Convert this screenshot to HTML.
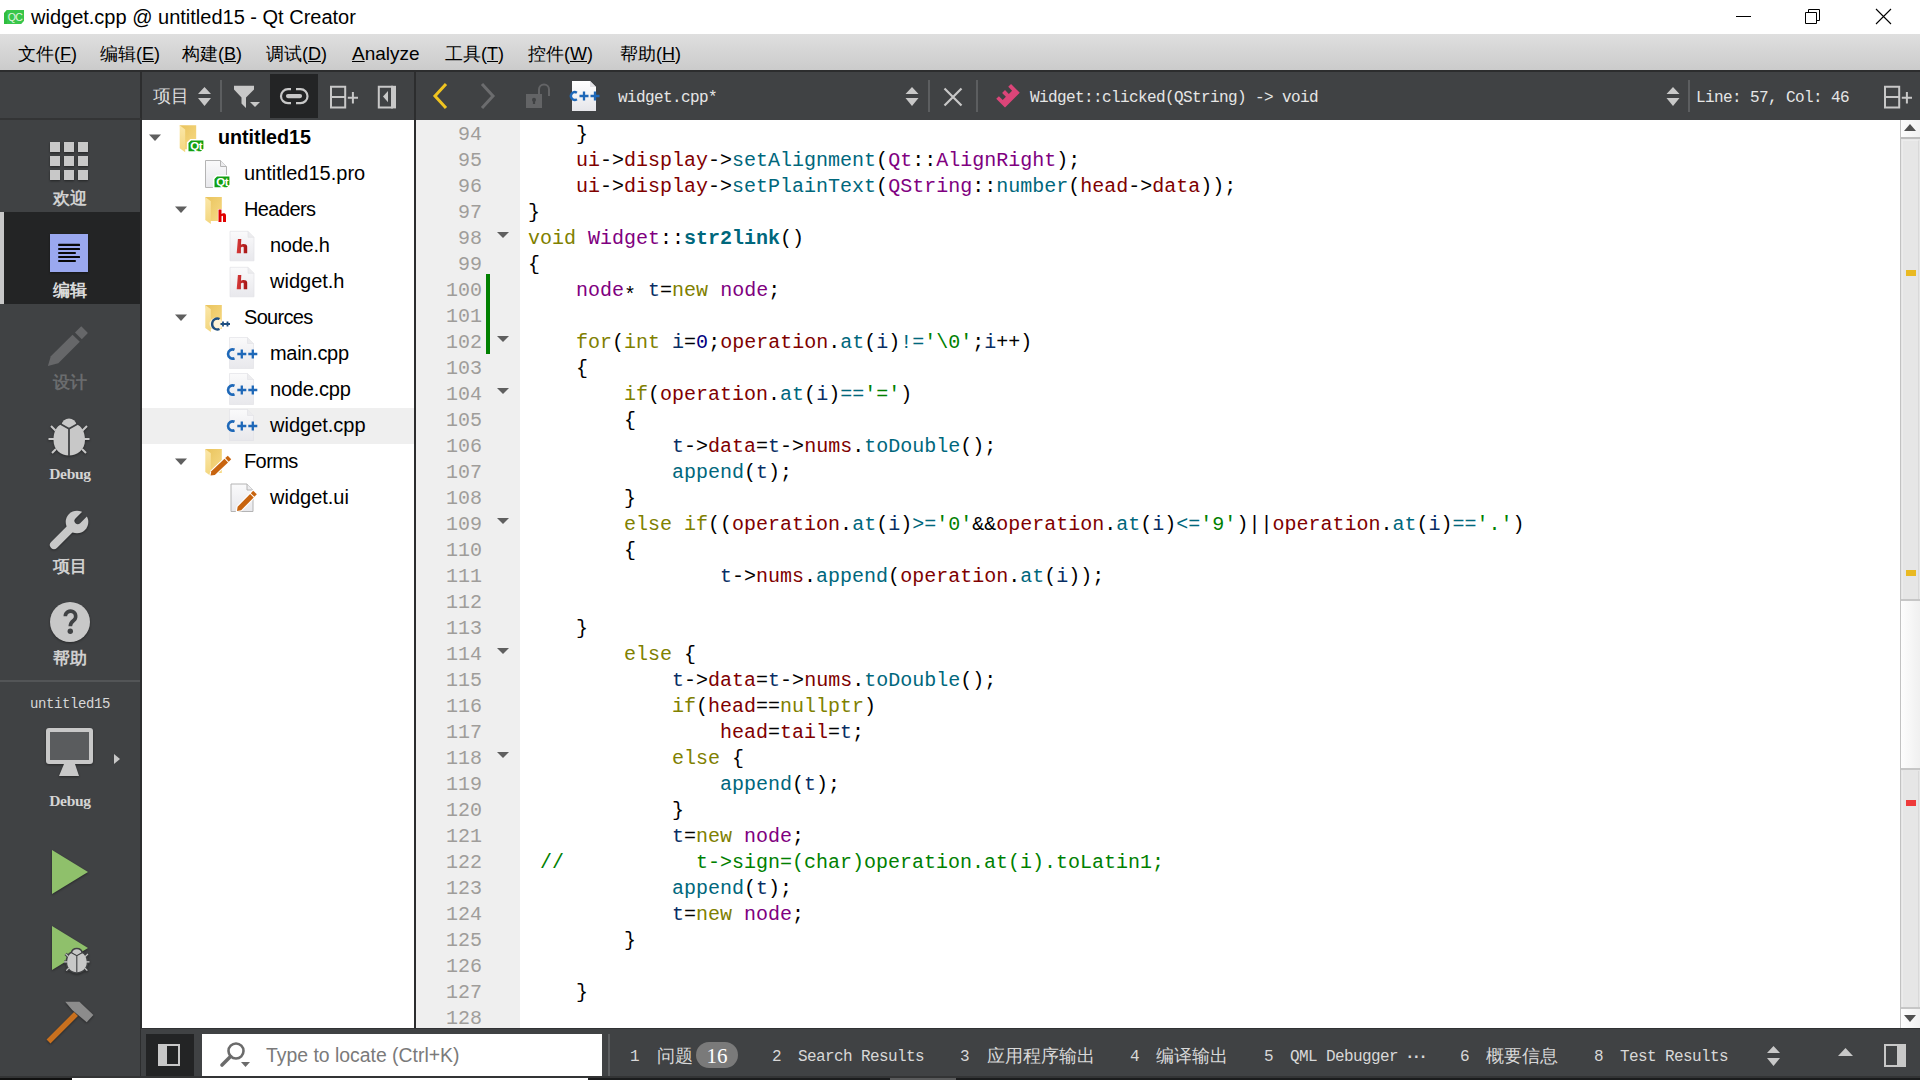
<!DOCTYPE html>
<html><head><meta charset="utf-8">
<style>
*{box-sizing:border-box}
html,body{margin:0;padding:0}
body{width:1920px;height:1080px;position:relative;overflow:hidden;background:#fff;font-family:"Liberation Sans",sans-serif}
.a{position:absolute}
.mono{font-family:"Liberation Mono",monospace}
/* title */
#title{left:0;top:0;width:1920px;height:34px;background:#fff}
#menubar{left:0;top:34px;width:1920px;height:36px;background:linear-gradient(#dfdfdf,#cbcbcb)}
.menu{top:36px;height:36px;line-height:36px;font-size:18px;color:#000;white-space:nowrap}
#toolbar{left:0;top:70px;width:1920px;height:50px;background:#404244;border-top:2px solid #2c2d2e}
#modebar{left:0;top:120px;width:141px;height:960px;background:#404244}
#tree{left:142px;top:120px;width:272px;height:908px;background:#fff}
#gutter{left:416px;top:120px;width:104px;height:908px;background:#efefef}
#code{left:520px;top:120px;width:1380px;height:908px;background:#fff;overflow:hidden}
#bottombar{left:141px;top:1028px;width:1779px;height:52px;background:#404244}
.ln{position:absolute;left:416px;width:66px;text-align:right;font-family:"Liberation Mono",monospace;font-size:20px;line-height:26px;color:#9f9d9a;white-space:pre}
pre.src{position:absolute;left:528px;top:122px;margin:0;font-family:"Liberation Mono",monospace;font-size:20px;line-height:26px;color:#000;white-space:pre}
.k{color:#808000}.t{color:#800080}.f{color:#800000}.fn{color:#00677c}.l{color:#092e64}.n{color:#000080}.s{color:#008000}.c{color:#008000}.b{font-weight:bold}
.tree{position:absolute;font-size:20px;color:#000;white-space:nowrap;line-height:36px;height:36px}
.mtxt{position:absolute;left:0;width:140px;text-align:center;font-size:16.5px;font-weight:bold;color:#d0d0d0;white-space:nowrap}
.btxt{position:absolute;top:1032px;height:50px;line-height:50px;font-family:"Liberation Mono",monospace;font-size:16px;letter-spacing:-0.6px;color:#d8d8d8;white-space:nowrap}
.bcj{font-family:"Liberation Sans",sans-serif!important;font-size:17.7px!important;letter-spacing:0!important;top:1031px!important}
</style></head><body>
<!-- TITLE BAR -->
<div id="title" class="a"></div>
<svg class="a" style="left:4px;top:10px" width="20" height="14" viewBox="0 0 20 14"><path d="M2.8 0H20V10.8L17 14H0V3z" fill="#2fbd3f"/><path d="M2.8 0H20V10.8L17 14H3V3z" fill="#40cc52" opacity="0.6"/><text x="11" y="11.2" font-family="Liberation Sans" font-size="10.5" fill="#e0f5e0" text-anchor="middle" letter-spacing="-0.5">QC</text></svg>
<div class="a" style="left:31px;top:0;height:34px;line-height:34px;font-size:20px;color:#000;white-space:nowrap">widget.cpp @ untitled15 - Qt Creator</div>
<div class="a" style="left:1736px;top:16px;width:15px;height:1px;background:#000"></div>
<svg class="a" style="left:1804px;top:8px" width="18" height="18" viewBox="0 0 18 18"><path d="M1.5 4.5h11v11h-11z M4.5 4.5V1.5h11v11h-3" fill="none" stroke="#000" stroke-width="1"/></svg>
<svg class="a" style="left:1875px;top:8px" width="18" height="18" viewBox="0 0 18 18"><path d="M1 1L16 16M16 1L1 16" stroke="#000" stroke-width="1.1"/></svg>
<!-- MENU -->
<div id="menubar" class="a"></div>
<div class="a menu" style="left:18px">文件(<u>F</u>)</div>
<div class="a menu" style="left:100px">编辑(<u>E</u>)</div>
<div class="a menu" style="left:182px">构建(<u>B</u>)</div>
<div class="a menu" style="left:266px">调试(<u>D</u>)</div>
<div class="a menu" style="left:352px;font-size:19px"><u>A</u>nalyze</div>
<div class="a menu" style="left:445px">工具(<u>T</u>)</div>
<div class="a menu" style="left:528px">控件(<u>W</u>)</div>
<div class="a menu" style="left:620px">帮助(<u>H</u>)</div>
<!-- TOOLBAR -->
<div id="toolbar" class="a"></div>

<div class="a" style="left:140px;top:72px;width:2px;height:48px;background:#2c2d2e"></div>
<div class="a" style="left:153px;top:72px;height:48px;line-height:48px;font-size:18px;color:#dcdcdc;white-space:nowrap">项目</div>
<svg class="a" style="left:197px;top:86px" width="15" height="21" viewBox="0 0 15 21"><path d="M7.5 1L14 8H1z M1 12H14L7.5 20z" fill="#c8c8c8"/></svg>
<div class="a" style="left:220px;top:80px;width:2px;height:32px;background:#5c5e60"></div>
<svg class="a" style="left:230px;top:80px" width="34" height="32" viewBox="230 80 34 32"><path d="M234 85.8H254V89.5L246 97.5V108L241.5 103.5V97.5L234 89.5z" fill="#c8c8c8"/><path d="M250 102H260L255 107z" fill="#c8c8c8"/></svg>
<div class="a" style="left:270px;top:74px;width:48px;height:44px;background:#232425"></div>
<svg class="a" style="left:276px;top:84px" width="36" height="24" viewBox="276 84 36 24"><path d="M291 89.2H288A7 7 0 0 0 288 103.2H291M296 89.2H300.5A7 7 0 0 1 300.5 103.2H296" fill="none" stroke="#c8c8c8" stroke-width="2.2"/><path d="M288 96.1H300" stroke="#c8c8c8" stroke-width="4.2" stroke-linecap="round"/></svg>
<svg class="a" style="left:326px;top:82px" width="36" height="30" viewBox="326 82 36 30"><path d="M331 86.8H345.2V107.4H331zM331 97H345.2" fill="none" stroke="#c8c8c8" stroke-width="2"/><path d="M347.8 97.8H358M352.9 92V103.6" stroke="#c8c8c8" stroke-width="2"/></svg>
<svg class="a" style="left:374px;top:82px" width="26" height="30" viewBox="374 82 26 30"><path d="M378.8 86.8H392V107.4H378.8z" fill="none" stroke="#c8c8c8" stroke-width="2"/><path d="M391 85.8H396V108.4H391z" fill="#c8c8c8"/><path d="M388 91V102.2L383 96.6z" fill="#c8c8c8"/></svg>
<div class="a" style="left:414px;top:72px;width:2px;height:48px;background:#2c2d2e"></div>
<svg class="a" style="left:431px;top:82px" width="18" height="28" viewBox="0 0 18 28"><path d="M15 2L4 14L15 26" fill="none" stroke="#f0c420" stroke-width="3"/></svg>
<svg class="a" style="left:479px;top:82px" width="18" height="28" viewBox="0 0 18 28"><path d="M3 2L14 14L3 26" fill="none" stroke="#6b6c6e" stroke-width="3"/></svg>
<svg class="a" style="left:520px;top:80px" width="36" height="32" viewBox="520 80 36 32"><path d="M526 94H542V108H526z" fill="#636466"/><circle cx="534" cy="99.8" r="2" fill="#404244"/><path d="M534 100V104" stroke="#404244" stroke-width="2.2"/><path d="M539 94V89.5A5 5 0 0 1 549 89.5V96" fill="none" stroke="#636466" stroke-width="2"/></svg>
<svg class="a" style="left:564px;top:78px" width="40" height="36" viewBox="564 78 40 36"><defs><linearGradient id="pg2" x1="0" y1="0" x2="0" y2="1"><stop offset="0" stop-color="#ffffff"/><stop offset="1" stop-color="#e6e6ea"/></linearGradient></defs><path d="M572 81H590L596 87V111H572z" fill="url(#pg2)"/><path d="M590 81V87H596" fill="#e2e2e6"/><path d="M576.9 92.7A3.9 3.9 0 1 0 576.9 99.3" fill="none" stroke="#1e68b8" stroke-width="2.4"/><path d="M579.5 96H588.5M584.0 91.5V100.5M590.5 96H599.5M595.0 91.5V100.5" stroke="#1e68b8" stroke-width="2.3"/></svg>
<div class="a mono" style="left:618px;top:74px;height:48px;line-height:48px;font-size:16px;letter-spacing:-0.6px;color:#e6e6e6;white-space:pre">widget.cpp*</div>
<svg class="a" style="left:904px;top:86px" width="16" height="21" viewBox="0 0 16 21"><path d="M8 1L14.5 8H1.5z M1.5 12H14.5L8 20z" fill="#c8c8c8"/></svg>
<div class="a" style="left:928px;top:80px;width:2px;height:32px;background:#5c5e60"></div>
<svg class="a" style="left:942px;top:86px" width="22" height="22" viewBox="0 0 22 22"><path d="M2.5 2.5L19.5 19.5M19.5 2.5L2.5 19.5" stroke="#c8c8c8" stroke-width="2.2"/></svg>
<div class="a" style="left:976px;top:80px;width:2px;height:32px;background:#5c5e60"></div>
<svg class="a" style="left:990px;top:80px" width="34" height="32" viewBox="990 80 34 32"><path d="M1005.00 107.60L1019.78 92.82L1011.01 84.05L1008.25 86.81L1012.07 90.63L1008.82 93.88L1005.00 90.06L1002.10 92.96L1005.92 96.78L1002.74 99.96L998.92 96.14L996.23 98.83z" fill="#dc4579"/></svg>
<div class="a mono" style="left:1030px;top:74px;height:48px;line-height:48px;font-size:16px;letter-spacing:-0.6px;color:#e6e6e6;white-space:pre">Widget::clicked(QString) -&gt; void</div>
<svg class="a" style="left:1665px;top:86px" width="16" height="21" viewBox="0 0 16 21"><path d="M8 1L14.5 8H1.5z M1.5 12H14.5L8 20z" fill="#c8c8c8"/></svg>
<div class="a" style="left:1688px;top:80px;width:2px;height:32px;background:#5c5e60"></div>
<div class="a mono" style="left:1696px;top:74px;height:48px;line-height:48px;font-size:16px;letter-spacing:-0.6px;color:#e6e6e6;white-space:pre">Line: 57, Col: 46</div>
<svg class="a" style="left:1880px;top:82px" width="36" height="30" viewBox="1880 82 36 30"><path d="M1885 86.8H1899.2V107.4H1885zM1885 97H1899.2" fill="none" stroke="#c8c8c8" stroke-width="2"/><path d="M1901.8 97.8H1912M1906.9 92V103.6" stroke="#c8c8c8" stroke-width="2"/></svg>

<!-- MODE BAR -->
<div id="modebar" class="a"></div>
<div class="a" style="left:140px;top:120px;width:2px;height:960px;background:#2c2d2e"></div><div class="a" style="left:0;top:118px;width:141px;height:2px;background:#333435"></div>
<svg class="a" style="left:50px;top:142px;filter:drop-shadow(0 1px 1px rgba(0,0,0,0.45))" width="39" height="40" viewBox="0 0 39 40"><g fill="#c8c8c8"><rect x="0" y="0" width="10" height="10"/><rect x="14" y="0" width="10" height="10"/><rect x="28" y="0" width="10" height="10"/><rect x="0" y="14" width="10" height="10"/><rect x="14" y="14" width="10" height="10"/><rect x="28" y="14" width="10" height="10"/><rect x="0" y="28" width="10" height="10"/><rect x="14" y="28" width="10" height="10"/><rect x="28" y="28" width="10" height="10"/></g></svg>
<div class="mtxt" style="top:187px;height:22px;line-height:22px">欢迎</div>
<div class="a" style="left:0;top:212px;width:140px;height:92px;background:#232425"></div>
<div class="a" style="left:0;top:212px;width:4px;height:92px;background:#c8c8c8"></div>
<svg class="a" style="left:50px;top:234px;filter:drop-shadow(0 1px 1px rgba(0,0,0,0.4))" width="38" height="38" viewBox="0 0 38 38"><rect width="38" height="38" fill="#9aa8ef"/><g fill="#080808"><rect x="8.2" y="9.8" width="21.8" height="2.1" rx="0.5"/><rect x="8.2" y="13.9" width="21.8" height="2.1" rx="0.5"/><rect x="8.2" y="17.9" width="17.6" height="2.1" rx="0.5"/><rect x="8.2" y="21.9" width="21.8" height="2.1" rx="0.5"/><rect x="8.2" y="25.9" width="17.6" height="2.1" rx="0.5"/></g></svg>
<div class="mtxt" style="top:279px;height:22px;line-height:22px;color:#dadada;font-weight:bold">编辑</div>
<svg class="a" style="left:44px;top:322px" width="48" height="48" viewBox="44 322 48 48"><path d="M47.9 366L50.8 356.3L72.5 334.8L79.8 341.8L58.3 363.3z" fill="#666769"/><path d="M75 332.5L81.25 326.25L87.9 332.9L81.8 339.2z" fill="#666769"/></svg>
<div class="mtxt" style="top:371px;height:22px;line-height:22px;color:#6a6c6e">设计</div>
<svg class="a" style="left:46px;top:414px;filter:drop-shadow(0 1px 1px rgba(0,0,0,0.4))" width="46" height="46" viewBox="46 414 46 46"><path d="M61.5 424.5A7.6 7.2 0 0 1 76.5 424.5L69 428.5z" fill="#c8c8c8"/><path d="M53.5 440C53.5 431 57 426 61 424.5L69 429L77 424.5C81 426 85 431 85 440C85 450 77 455.5 69 455.5C61 455.5 53.5 450 53.5 440z" fill="#c8c8c8"/><path d="M60.5 424L69 428.8L77.5 424M69 428.8V456" fill="none" stroke="#404244" stroke-width="1.8"/><path d="M51 426L55.5 430.5M48.5 439H54M52 453L56 449M87 426L82.5 430.5M89.5 439H84M86 453L82 449" stroke="#c8c8c8" stroke-width="2"/></svg>
<div class="mtxt" style="top:463px;height:22px;line-height:22px;font-family:'Liberation Serif';font-size:15.5px;font-weight:bold;letter-spacing:-0.3px;color:#d4d4d4">Debug</div>
<svg class="a" style="left:46px;top:506px;filter:drop-shadow(0 1px 1px rgba(0,0,0,0.4))" width="48" height="46" viewBox="46 506 48 46"><defs><mask id="wm" maskUnits="userSpaceOnUse" x="46" y="506" width="48" height="46"><rect x="46" y="506" width="48" height="46" fill="#fff"/><path d="M77.8 520.8L94 504.6" stroke="#000" stroke-width="6.6" stroke-linecap="round"/></mask></defs><g mask="url(#wm)"><circle cx="77" cy="522" r="11.3" fill="#c8c8c8"/><path d="M54 545L71 528" stroke="#c8c8c8" stroke-width="8.2" stroke-linecap="round"/></g></svg>
<div class="mtxt" style="top:555px;height:22px;line-height:22px">项目</div>
<svg class="a" style="left:46px;top:597px;filter:drop-shadow(0 1px 1px rgba(0,0,0,0.4))" width="48" height="48" viewBox="46 598 48 48"><circle cx="70" cy="623" r="20" fill="#c8c8c8"/><path d="M65.3 617.3A5.2 5.2 0 1 1 73.6 621.5C71.3 623.3 70.3 624.3 70.3 627.3" fill="none" stroke="#404244" stroke-width="3.6"/><circle cx="70.3" cy="632.3" r="2.7" fill="#404244"/></svg>
<div class="mtxt" style="top:647px;height:22px;line-height:22px">帮助</div>
<div class="a" style="left:0;top:680px;width:140px;height:2px;background:#535557"></div>
<div class="mtxt mono" style="top:693px;height:22px;line-height:22px;font-size:14px;letter-spacing:-0.4px;font-weight:normal;color:#d8d8d8">untitled15</div>
<svg class="a" style="left:44px;top:726px;filter:drop-shadow(0 1px 1px rgba(0,0,0,0.4))" width="52" height="52" viewBox="0 0 52 52"><rect x="2" y="2" width="47" height="36" rx="3" fill="#c8c8c8"/><rect x="6" y="6" width="39" height="28" fill="#5a5c5e"/><path d="M20 38H31L35 50H15z" fill="#c8c8c8"/></svg>
<svg class="a" style="left:112px;top:752px" width="10" height="14" viewBox="0 0 10 14"><path d="M2 2L8 7L2 12z" fill="#c8c8c8"/></svg>
<div class="mtxt" style="top:790px;height:22px;line-height:22px;font-family:'Liberation Serif';font-size:15.5px;font-weight:bold;letter-spacing:-0.3px;color:#d4d4d4">Debug</div>
<svg class="a" style="left:50px;top:848px;filter:drop-shadow(0 1px 1px rgba(0,0,0,0.4))" width="40" height="48" viewBox="0 0 40 48"><path d="M2 2L38 24L2 46z" fill="#8fc06b"/></svg>
<svg class="a" style="left:46px;top:920px;filter:drop-shadow(0 1px 1px rgba(0,0,0,0.4))" width="50" height="56" viewBox="46 920 50 56"><path d="M52 926L88 948L52 970z" fill="#8fc06b"/><g transform="translate(76.8 960.4) scale(0.62) translate(-69 -436.5)"><path d="M61.5 424.5A7.6 7.2 0 0 1 76.5 424.5L69 428.5z" fill="none" stroke="#404244" stroke-width="5"/><path d="M53.5 440C53.5 431 57 426 61 424.5L69 429L77 424.5C81 426 85 431 85 440C85 450 77 455.5 69 455.5C61 455.5 53.5 450 53.5 440z" fill="#404244" stroke="#404244" stroke-width="5"/><path d="M51 426L55.5 430.5M48.5 439H54M52 453L56 449M87 426L82.5 430.5M89.5 439H84M86 453L82 449" stroke="#404244" stroke-width="5"/><path d="M61.5 424.5A7.6 7.2 0 0 1 76.5 424.5L69 428.5z" fill="#c8c8c8"/><path d="M53.5 440C53.5 431 57 426 61 424.5L69 429L77 424.5C81 426 85 431 85 440C85 450 77 455.5 69 455.5C61 455.5 53.5 450 53.5 440z" fill="#c8c8c8"/><path d="M60.5 424L69 428.8L77.5 424M69 428.8V456" fill="none" stroke="#404244" stroke-width="1.8"/><path d="M51 426L55.5 430.5M48.5 439H54M52 453L56 449M87 426L82.5 430.5M89.5 439H84M86 453L82 449" stroke="#c8c8c8" stroke-width="2"/></g></svg>
<svg class="a" style="left:44px;top:998px;filter:drop-shadow(0 1px 1px rgba(0,0,0,0.4))" width="52" height="48" viewBox="44 998 52 48"><path d="M48.5 1041.5L76 1014" stroke="#c8701e" stroke-width="5.5"/><path d="M65.2 1001.7L79.4 1001.7L93.4 1015L86.7 1022.2L72.2 1010z" fill="#8c8c8c"/></svg>
<div class="a" style="left:0;top:1076px;width:141px;height:2px;background:#333435"></div>
<div class="a" style="left:0;top:1078px;width:72px;height:2px;background:#111"></div>

<!-- TREE -->
<div class="a" style="left:142px;top:408px;width:272px;height:36px;background:#efefef"></div>
<svg class="a" style="left:142px;top:120px" width="272" height="400" viewBox="142 120 272 400"><defs><linearGradient id="fb" x1="0" y1="0" x2="1" y2="1"><stop offset="0" stop-color="#e9c35c"/><stop offset="1" stop-color="#f7da86"/></linearGradient><linearGradient id="ff" x1="0" y1="0" x2="0" y2="1"><stop offset="0" stop-color="#fbe7a8"/><stop offset="1" stop-color="#f3d67e"/></linearGradient><linearGradient id="pg" x1="0" y1="0" x2="0" y2="1"><stop offset="0" stop-color="#fafafb"/><stop offset="1" stop-color="#e8e8ec"/></linearGradient><linearGradient id="hr" x1="0" y1="0" x2="1" y2="0"><stop offset="0" stop-color="#d83a3a"/><stop offset="1" stop-color="#a51515"/></linearGradient></defs><path d="M149 134.5H161L155 141.0z" fill="#5f5f5f"/><path d="M179.7 125.2H196.2V149.2H183.7z" fill="url(#fb)"/><path d="M179.7 125.2L185.2 129.4V152.2L179.7 148.2z" fill="url(#ff)"/><path d="M190.7 139.7H204.2V149.0L201.2 152.0H187.7V142.7z" fill="#12a012" stroke="#fff" stroke-width="1.6"/><text x="196.14999999999998" y="149.8" font-family="Liberation Sans" font-weight="bold" font-size="11.5" fill="#fff" text-anchor="middle" letter-spacing="-0.4">Qt</text><path d="M205.5 160.5H220.5L226.5 166.5V187.5H205.5z" fill="url(#pg)" stroke="#b4b4b4" stroke-width="1"/><path d="M220.5 160.5V166.5H226.5" fill="#ececee" stroke="#b4b4b4" stroke-width="1"/><path d="M216.7 175.7H230.2V185.0L227.2 188.0H213.7V178.7z" fill="#12a012" stroke="#fff" stroke-width="1.6"/><text x="222.14999999999998" y="185.8" font-family="Liberation Sans" font-weight="bold" font-size="11.5" fill="#fff" text-anchor="middle" letter-spacing="-0.4">Qt</text><path d="M175 206.5H187L181 213.0z" fill="#5f5f5f"/><path d="M205.3 197H221.8V221H209.3z" fill="url(#fb)"/><path d="M205.3 197L210.8 201.2V224L205.3 220z" fill="url(#ff)"/><path d="M218.5 209.5H221.5V214C222.5 213 226 212.5 226 215.5V222H223V216.5C223 215.5 222 215.5 221.5 216.2V222H218.5z" fill="#e00000" stroke="#fff" stroke-width="1.2" paint-order="stroke"/><path d="M230 231.3H248L254 237.3V260.8H230z" fill="url(#pg)" stroke="#e2e2e6" stroke-width="0.7"/><path d="M248 231.3V237.3H254" fill="#ececee" stroke="#e2e2e6" stroke-width="0.7"/><path d="M237.89999999999998 239H241.29999999999998L241.0 244.6C242.2 243.6 247.2 243.2 247.2 246.5V253.2H243.7V247.5C243.7 246.5 241.7 246.5 240.89999999999998 247.6V253.2H236.7z" fill="url(#hr)"/><path d="M230 267.3H248L254 273.3V296.8H230z" fill="url(#pg)" stroke="#e2e2e6" stroke-width="0.7"/><path d="M248 267.3V273.3H254" fill="#ececee" stroke="#e2e2e6" stroke-width="0.7"/><path d="M237.89999999999998 275H241.29999999999998L241.0 280.6C242.2 279.6 247.2 279.2 247.2 282.5V289.2H243.7V283.5C243.7 282.5 241.7 282.5 240.89999999999998 283.6V289.2H236.7z" fill="url(#hr)"/><path d="M175 314.5H187L181 321.0z" fill="#5f5f5f"/><path d="M205.3 305H221.8V329H209.3z" fill="url(#fb)"/><path d="M205.3 305L210.8 309.2V332L205.3 328z" fill="url(#ff)"/><circle cx="216" cy="324" r="6.5" fill="#fff6e0" opacity="0.9"/><path d="M219.5 319A5.2 5.5 0 1 0 219.5 329" fill="none" stroke="#1f4f80" stroke-width="2.4"/><path d="M220.5 324H225.5M223 321.5V326.5M225 324H230M227.5 321.5V326.5" stroke="#1f4f80" stroke-width="1.8"/><path d="M229.5 337.5H247.5L253.5 343.5V368.5H229.5z" fill="url(#pg)" stroke="#e2e2e6" stroke-width="0.7"/><path d="M247.5 337.5V343.5H253.5" fill="#ececee" stroke="#e2e2e6" stroke-width="0.7"/><path d="M234.5 349.8A4.6 4.6 0 1 0 234.5 358.2" fill="none" stroke="#1e68b8" stroke-width="2.6"/><path d="M237.3 354H246.3M241.8 349.5V358.5M248.3 354H257.3M252.8 349.5V358.5" stroke="#1e68b8" stroke-width="2.3"/><path d="M229.5 373.5H247.5L253.5 379.5V404.5H229.5z" fill="url(#pg)" stroke="#e2e2e6" stroke-width="0.7"/><path d="M247.5 373.5V379.5H253.5" fill="#ececee" stroke="#e2e2e6" stroke-width="0.7"/><path d="M234.5 385.8A4.6 4.6 0 1 0 234.5 394.2" fill="none" stroke="#1e68b8" stroke-width="2.6"/><path d="M237.3 390H246.3M241.8 385.5V394.5M248.3 390H257.3M252.8 385.5V394.5" stroke="#1e68b8" stroke-width="2.3"/><path d="M229.5 409.5H247.5L253.5 415.5V440.5H229.5z" fill="url(#pg)" stroke="#e2e2e6" stroke-width="0.7"/><path d="M247.5 409.5V415.5H253.5" fill="#ececee" stroke="#e2e2e6" stroke-width="0.7"/><path d="M234.5 421.8A4.6 4.6 0 1 0 234.5 430.2" fill="none" stroke="#1e68b8" stroke-width="2.6"/><path d="M237.3 426H246.3M241.8 421.5V430.5M248.3 426H257.3M252.8 421.5V430.5" stroke="#1e68b8" stroke-width="2.3"/><path d="M175 458.5H187L181 465.0z" fill="#5f5f5f"/><path d="M205.3 449H221.8V473H209.3z" fill="url(#fb)"/><path d="M205.3 449L210.8 453.2V476L205.3 472z" fill="url(#ff)"/><path d="M210.5 475.5L214.8 474.9L228.0 462.4L224.5 458.8L211.3 471.3z" fill="none" stroke="#fff" stroke-width="2.2"/><path d="M228.7 461.7L231.2 459.3L227.8 455.7L225.2 458.1z" fill="none" stroke="#fff" stroke-width="2.2"/><path d="M210.5 475.5L214.8 474.9L228.0 462.4L224.5 458.8L211.3 471.3z" fill="#c8640f"/><path d="M228.7 461.7L231.2 459.3L227.8 455.7L225.2 458.1z" fill="#c8640f"/><path d="M231 484H247L253 490V511.5H231z" fill="url(#pg)" stroke="#b4b4b4" stroke-width="1"/><path d="M247 484V490H253" fill="#ececee" stroke="#b4b4b4" stroke-width="1"/><path d="M237.0 511.0L241.2 510.2L253.7 497.5L250.1 494.0L237.6 506.7z" fill="none" stroke="#fff" stroke-width="2.2"/><path d="M254.4 496.8L256.8 494.2L253.2 490.8L250.8 493.3z" fill="none" stroke="#fff" stroke-width="2.2"/><path d="M237.0 511.0L241.2 510.2L253.7 497.5L250.1 494.0L237.6 506.7z" fill="#c8640f"/><path d="M254.4 496.8L256.8 494.2L253.2 490.8L250.8 493.3z" fill="#c8640f"/></svg>
<div class="tree" style="left:218px;top:119px;font-weight:bold;font-size:19.7px">untitled15</div>
<div class="tree" style="left:244px;top:155px">untitled15.pro</div>
<div class="tree" style="left:244px;top:191px;letter-spacing:-0.6px">Headers</div>
<div class="tree" style="left:270px;top:227px;letter-spacing:-0.25px">node.h</div>
<div class="tree" style="left:270px;top:263px">widget.h</div>
<div class="tree" style="left:244px;top:299px;letter-spacing:-0.7px">Sources</div>
<div class="tree" style="left:270px;top:335px;letter-spacing:-0.3px">main.cpp</div>
<div class="tree" style="left:270px;top:371px;letter-spacing:-0.2px">node.cpp</div>
<div class="tree" style="left:270px;top:407px">widget.cpp</div>
<div class="tree" style="left:244px;top:443px;letter-spacing:-0.6px">Forms</div>
<div class="tree" style="left:270px;top:479px">widget.ui</div>
<div class="a" style="left:414px;top:120px;width:2px;height:908px;background:#2c2d2e"></div>

<!-- EDITOR -->
<div id="gutter" class="a"></div>
<pre class="ln a" style="top:122px;margin:0">94
95
96
97
98
99
100
101
102
103
104
105
106
107
108
109
110
111
112
113
114
115
116
117
118
119
120
121
122
123
124
125
126
127
128</pre>
<svg class="a" style="left:497px;top:119px" width="13" height="908" viewBox="0 0 13 908" fill="#5f5f5f"><path d="M0 113H12L6 119z"/><path d="M0 217H12L6 223z"/><path d="M0 269H12L6 275z"/><path d="M0 399H12L6 405z"/><path d="M0 529H12L6 535z"/><path d="M0 633H12L6 639z"/></svg>
<div class="a" style="left:486px;top:274px;width:4px;height:80px;background:#008000"></div>
<pre class="src">    }
    <span class="f">ui</span>-&gt;<span class="f">display</span>-&gt;<span class="fn">setAlignment</span>(<span class="t">Qt</span>::<span class="t">AlignRight</span>);
    <span class="f">ui</span>-&gt;<span class="f">display</span>-&gt;<span class="fn">setPlainText</span>(<span class="t">QString</span>::<span class="fn">number</span>(<span class="f">head</span>-&gt;<span class="f">data</span>));
}
<span class="k">void</span> <span class="t">Widget</span>::<span class="fn b">str2link</span>()
{
    <span class="t">node</span><span style="position:relative;top:5px">*</span> <span class="l">t</span>=<span class="k">new</span> <span class="t">node</span>;

    <span class="k">for</span>(<span class="k">int</span> <span class="l">i</span>=<span class="n">0</span>;<span class="f">operation</span>.<span class="fn">at</span>(<span class="l">i</span>)<span class="fn">!=</span><span class="s">'\0'</span>;<span class="l">i</span>++)
    {
        <span class="k">if</span>(<span class="f">operation</span>.<span class="fn">at</span>(<span class="l">i</span>)<span class="fn">==</span><span class="s">'='</span>)
        {
            <span class="l">t</span>-&gt;<span class="f">data</span>=<span class="l">t</span>-&gt;<span class="f">nums</span>.<span class="fn">toDouble</span>();
            <span class="fn">append</span>(<span class="l">t</span>);
        }
        <span class="k">else</span> <span class="k">if</span>((<span class="f">operation</span>.<span class="fn">at</span>(<span class="l">i</span>)<span class="fn">&gt;=</span><span class="s">'0'</span>&amp;&amp;<span class="f">operation</span>.<span class="fn">at</span>(<span class="l">i</span>)<span class="fn">&lt;=</span><span class="s">'9'</span>)||<span class="f">operation</span>.<span class="fn">at</span>(<span class="l">i</span>)<span class="fn">==</span><span class="s">'.'</span>)
        {
                <span class="l">t</span>-&gt;<span class="f">nums</span>.<span class="fn">append</span>(<span class="f">operation</span>.<span class="fn">at</span>(<span class="l">i</span>));

    }
        <span class="k">else</span> {
            <span class="l">t</span>-&gt;<span class="f">data</span>=<span class="l">t</span>-&gt;<span class="f">nums</span>.<span class="fn">toDouble</span>();
            <span class="k">if</span>(<span class="f">head</span>==<span class="k">nullptr</span>)
                <span class="f">head</span>=<span class="f">tail</span>=<span class="l">t</span>;
            <span class="k">else</span> {
                <span class="fn">append</span>(<span class="l">t</span>);
            }
            <span class="l">t</span>=<span class="k">new</span> <span class="t">node</span>;
 <span class="s">//           t-&gt;sign=(char)operation.at(i).toLatin1;</span>
            <span class="fn">append</span>(<span class="l">t</span>);
            <span class="l">t</span>=<span class="k">new</span> <span class="t">node</span>;
        }

    }
</pre>
<!-- SCROLLBAR -->
<div class="a" style="left:1900px;top:120px;width:20px;height:908px;background:#e6e6e6;border-left:1px solid #c2c2c2"></div>
<div class="a" style="left:1901px;top:120px;width:19px;height:19px;background:linear-gradient(90deg,#fdfdfd,#f1f1f1);border-bottom:2px solid #bdbdbd"></div><div class="a" style="left:1902px;top:140px;width:17px;height:459px;border-left:1px solid #ececec;border-right:1px solid #d9d9d9;border-top:1px solid #ececec"></div><div class="a" style="left:1902px;top:771px;width:17px;height:236px;border-left:1px solid #ececec;border-right:1px solid #d9d9d9"></div>
<svg class="a" style="left:1903px;top:123px" width="14" height="9" viewBox="0 0 14 9"><path d="M1 8H13L7 1z" fill="#505050"/></svg>
<div class="a" style="left:1901px;top:599px;width:19px;height:171px;background:linear-gradient(90deg,#fdfdfd,#f0f0f0);border-top:2px solid #c6c6c6;border-bottom:2px solid #c6c6c6"></div>
<div class="a" style="left:1901px;top:1007px;width:19px;height:21px;background:linear-gradient(90deg,#fdfdfd,#f1f1f1);border-top:2px solid #c6c6c6"></div>
<svg class="a" style="left:1903px;top:1014px" width="14" height="9" viewBox="0 0 14 9"><path d="M1 1H13L7 8z" fill="#505050"/></svg>
<div class="a" style="left:1906px;top:270px;width:10px;height:6px;background:#e9b922"></div>
<div class="a" style="left:1906px;top:570px;width:10px;height:6px;background:#e9b922"></div>
<div class="a" style="left:1906px;top:800px;width:10px;height:6px;background:#ee3a3a"></div>

<!-- BOTTOM BAR -->
<div id="bottombar" class="a"></div>
<div class="a" style="left:141px;top:1028px;width:1779px;height:1px;background:#313234"></div>
<div class="a" style="left:146px;top:1034px;width:48px;height:42px;background:#232425"></div>
<svg class="a" style="left:157px;top:1043px" width="24" height="24" viewBox="0 0 24 24"><rect x="1" y="1" width="22" height="22" fill="#c8c8c8"/><rect x="10" y="3" width="11" height="18" fill="#232425"/></svg>
<div class="a" style="left:202px;top:1034px;width:400px;height:42px;background:#fff"></div>
<svg class="a" style="left:219px;top:1041px" width="36" height="28" viewBox="0 0 36 28"><circle cx="17" cy="10" r="7.5" fill="none" stroke="#6b6b6b" stroke-width="2.6"/><path d="M11.5 15.5L3 24" stroke="#6b6b6b" stroke-width="3.6" stroke-linecap="round"/><path d="M22 21H31L26.5 26z" fill="#6b6b6b"/></svg>
<div class="a" style="left:266px;top:1034px;height:42px;line-height:42px;font-size:19.4px;color:#7a7a7a;white-space:nowrap">Type to locate (Ctrl+K)</div>
<div class="a" style="left:608px;top:1034px;width:2px;height:42px;background:#5c5e60"></div>
<div class="btxt" style="left:630px">1</div>
<div class="btxt bcj" style="left:657px">问题</div>
<div class="a" style="left:696px;top:1042px;width:42px;height:26px;border-radius:13px;background:#7a7a7a"></div>
<div class="a" style="left:696px;top:1043px;width:42px;height:26px;line-height:26px;text-align:center;font-family:'Liberation Serif';font-size:21px;color:#fff">16</div>
<div class="btxt" style="left:772px">2</div>
<div class="btxt" style="left:798px">Search Results</div>
<div class="btxt" style="left:960px">3</div>
<div class="btxt bcj" style="left:987px">应用程序输出</div>
<div class="btxt" style="left:1130px">4</div>
<div class="btxt bcj" style="left:1156px">编译输出</div>
<div class="btxt" style="left:1264px">5</div>
<div class="btxt" style="left:1290px">QML Debugger</div>
<div class="btxt" style="left:1405px;font-weight:bold;letter-spacing:-3px">···</div>
<div class="btxt" style="left:1460px">6</div>
<div class="btxt bcj" style="left:1486px">概要信息</div>
<div class="btxt" style="left:1594px">8</div>
<div class="btxt" style="left:1620px">Test Results</div>
<svg class="a" style="left:1766px;top:1045px" width="15" height="22" viewBox="0 0 15 22"><path d="M7.5 1L14 8H1z M1 13H14L7.5 21z" fill="#c8c8c8"/></svg>
<svg class="a" style="left:1837px;top:1046px" width="17" height="11" viewBox="0 0 17 11"><path d="M1 10H16L8.5 2z" fill="#c8c8c8"/></svg>
<svg class="a" style="left:1883px;top:1043px" width="24" height="25" viewBox="0 0 24 25"><rect x="1" y="1" width="22" height="23" fill="#c8c8c8"/><rect x="3" y="3" width="11" height="19" fill="#404244"/></svg>
<div class="a" style="left:141px;top:1076px;width:1779px;height:2px;background:#333435"></div>
<div class="a" style="left:72px;top:1078px;width:516px;height:2px;background:#fff"></div><div class="a" style="left:588px;top:1078px;width:1332px;height:2px;background:#1b1c1d"></div><div class="a" style="left:890px;top:1078px;width:66px;height:2px;background:#5a5b5c"></div>
</body></html>
